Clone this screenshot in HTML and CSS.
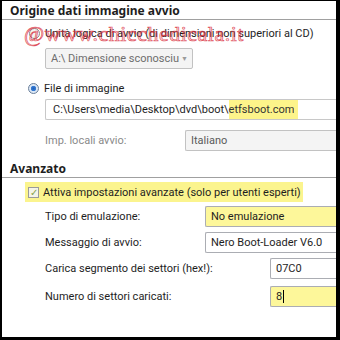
FILE: index.html
```html
<!doctype html>
<html>
<head>
    <link rel="stylesheet" href="styles.css">
</head>
<body>
    <div class="frame">
        <div class="section-title">Origine dati immagine avvio</div>
        <div class="section-body">
            <label class="option">
                <span class="radio"></span>
                <span>Unità logica di avvio (di dimensioni non superiori al CD)</span>
            </label>
            <div class="indent">
                <div class="select disabled drive">
                    <span>A:\ Dimensione sconosciu</span>
                    <span class="arrow">&#9660;</span>
                </div>
            </div>
            <label class="option file-option">
                <span class="radio checked"></span>
                <span>File di immagine</span>
            </label>
            <div class="indent">
                <div class="field path">C:\Users\media\Desktop\dvd\boot\<mark class="hl">etfsboot.com</mark><span class="hl tail"></span></div>
            </div>
            <div class="indent row locale">
                <span class="muted">Imp. locali avvio:</span>
                <div class="field disabled italiano">Italiano</div>
            </div>
        </div>

        <div class="section-title adv">Avanzato</div>
        <div class="section-body">
            <label class="option check-row">
                <span class="check">&#10003;</span>
                <span>Attiva impostazioni avanzate (solo per utenti esperti)</span>
            </label>
            <div class="indent row first">
                <span class="lbl">Tipo di emulazione:</span>
                <div class="field wide yellow">No emulazione</div>
            </div>
            <div class="indent row">
                <span class="lbl">Messaggio di avvio:</span>
                <div class="field wide">Nero Boot-Loader V6.0</div>
            </div>
            <div class="indent row">
                <span class="lbl">Carica segmento dei settori (hex!):</span>
                <div class="field narrow">07C0</div>
            </div>
            <div class="indent row last">
                <span class="lbl">Numero di settori caricati:</span>
                <div class="field narrow yellow">8<span class="caret"></span></div>
            </div>
        </div>

        <div class="watermark">@www.chicchedicala.it</div>
    </div>
</body>
</html>
```

FILE: styles.css
```css
body {
    margin: 0;
    background: #000;
    font-family: Roboto, "Noto Sans", sans-serif;
    font-size: 11px;
    color: #1e1e1e;
    overflow: hidden;
}
.frame {
    position: relative;
    margin: 1px 4px 3px 2px;
    height: 336px;
    background: #fff;
    overflow: hidden;
}
.section-title {
    font-family: "Noto Sans", sans-serif;
    font-weight: bold;
    font-size: 12px;
    padding: 1px 0 0 8px;
    height: 17px;
    border-bottom: 1px solid #a0a0a0;
}
.section-title.adv {
    margin-top: 8px;
}
.section-body {
    padding-top: 4px;
}
.option {
    display: flex;
    align-items: center;
    gap: 5px;
    padding-left: 27px;
    height: 18px;
    white-space: nowrap;
}
.file-option {
    margin-top: 10px;
    padding-left: 26px;
}
.radio {
    flex: none;
    width: 11px;
    height: 11px;
    border: 1px solid #8a8a8a;
    border-radius: 50%;
    background: #f4f4f4;
    box-sizing: border-box;
}
.radio.checked {
    background: radial-gradient(circle, #1d5fb8 0, #3b7fd6 2.5px, #dbe7f5 3px);
    border-color: #6a7f9a;
}
.indent {
    padding-left: 43px;
}
.select, .field {
    height: 21px;
    box-sizing: border-box;
    border: 1px solid #abadb3;
    border-radius: 2px;
    padding: 0 5px;
    display: flex;
    align-items: center;
    white-space: nowrap;
    overflow: hidden;
    background: #fff;
}
.disabled {
    background: #f4f4f4;
    color: #6d6d6d;
    border-color: #c2c2c2;
}
.drive {
    width: 148px;
    margin-top: 6px;
    justify-content: space-between;
    padding-right: 4px;
}
.arrow {
    font-size: 7px;
    color: #9a9a9a;
}
.path {
    margin-top: 2px;
    border-color: #c8c8c8;
    border-right: none;
    border-radius: 2px 0 0 2px;
    padding-left: 7px;
}
.hl {
    background: #fdf48a;
    color: #333;
    align-self: stretch;
    display: flex;
    align-items: center;
}
.tail {
    flex: 0 0 4px;
}
.row {
    display: flex;
    align-items: center;
    justify-content: space-between;
    margin-top: 5px;
}
.row.first {
    margin-top: 4px;
}
.row.last {
    margin-top: 7px;
}
.locale {
    margin-top: 10px;
}
.muted {
    color: #8a8a8a;
}
.italiano {
    width: 151px;
    border-right: none;
    border-radius: 3px 0 0 3px;
    color: #5a5a5a;
}
.check-row {
    margin-top: 0;
    margin-left: 23px;
    padding-left: 3px;
    width: 275px;
    height: 20px;
    gap: 4px;
    background: #fbf48e;
}
.check {
    flex: none;
    width: 11px;
    height: 11px;
    border: 1px solid #9a9a9a;
    box-sizing: border-box;
    font-size: 10px;
    line-height: 9px;
    text-align: center;
    color: #8aa24a;
    background: #f4f4e8;
}
.row .field {
    border-right: none;
    border-radius: 2px 0 0 2px;
}
.wide {
    width: 131px;
}
.narrow {
    width: 66px;
}
.yellow {
    background: #fdf79a;
}
.caret {
    display: inline-block;
    width: 1px;
    height: 13px;
    background: #000;
    margin-left: 1px;
}
.watermark {
    position: absolute;
    left: 22px;
    top: 21px;
    font-family: "Liberation Serif", serif;
    font-size: 22px;
    line-height: 24px;
    color: rgba(230, 70, 80, 0.2);
    -webkit-text-stroke: 0.7px rgba(215, 40, 55, 0.8);
    letter-spacing: 0.5px;
    pointer-events: none;
}
```
